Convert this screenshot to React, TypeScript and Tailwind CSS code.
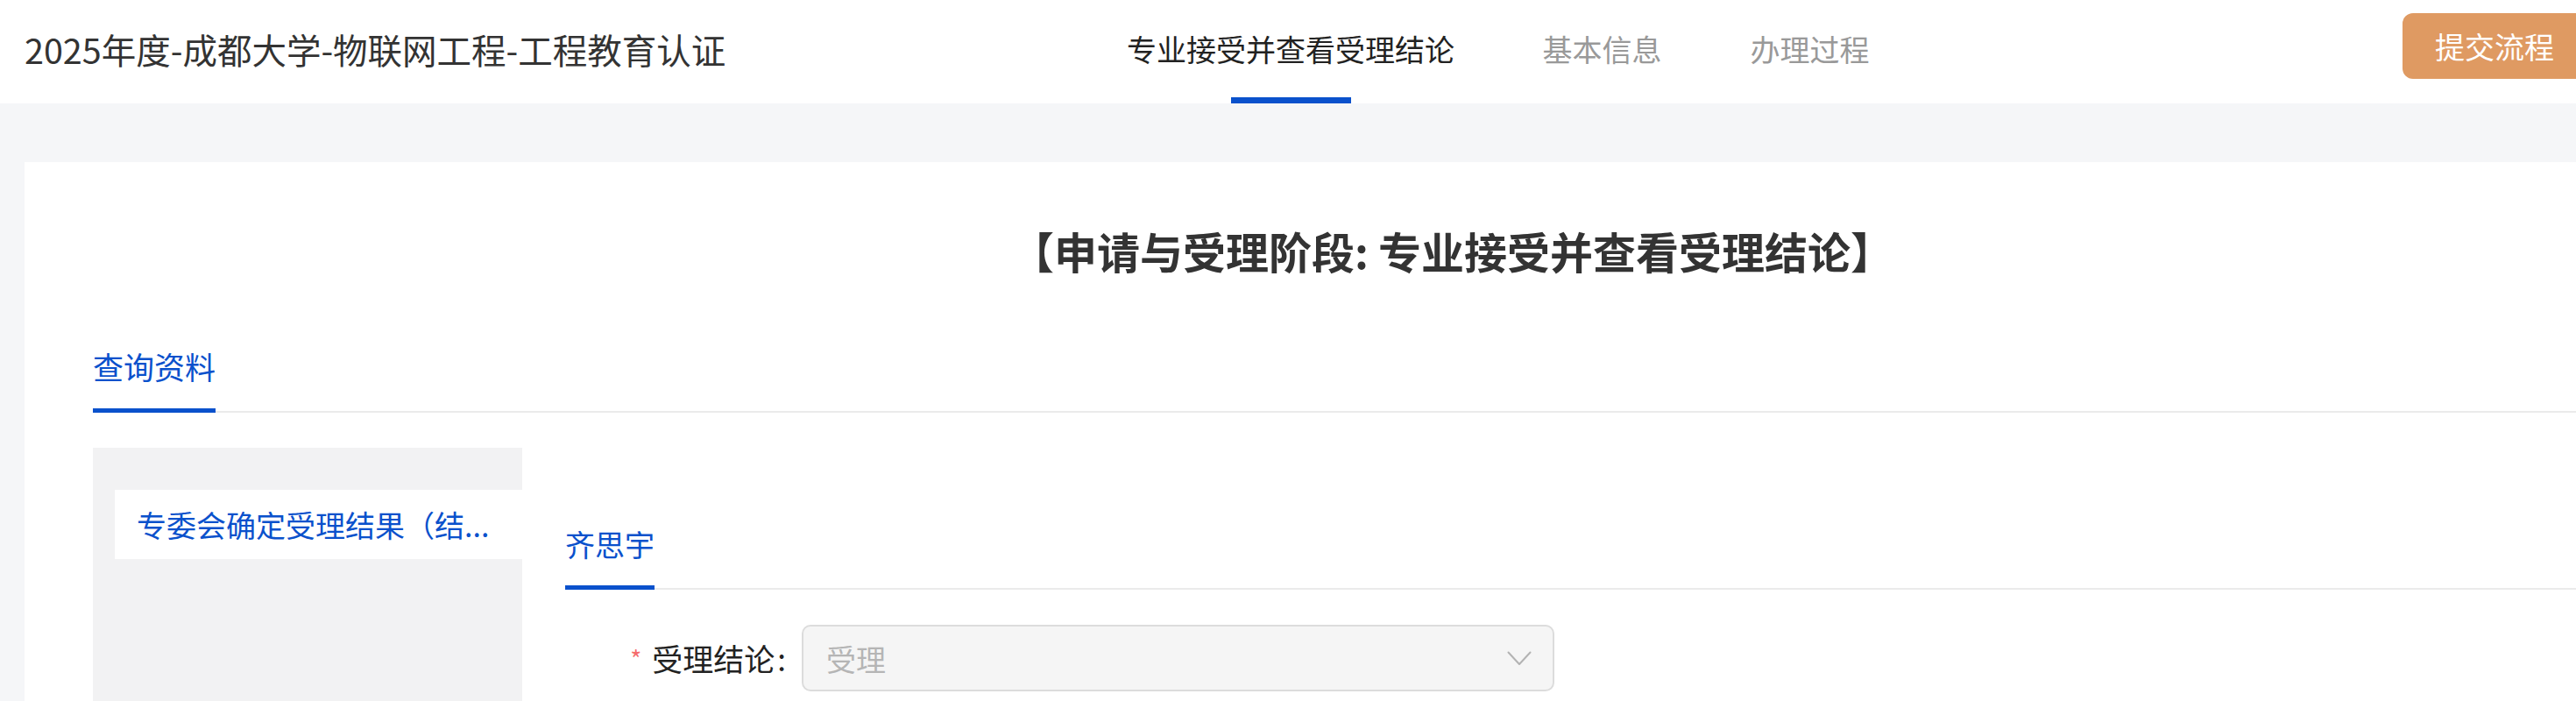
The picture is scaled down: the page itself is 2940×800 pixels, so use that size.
import { useState } from "react";

const navTabs = ["专业接受并查看受理结论", "基本信息", "办理过程"];

function Chevron() {
  return (
    <svg width="28" height="17" viewBox="0 0 28 17" fill="none">
      <path d="M1.5 1.5 L14 15 L26.5 1.5" stroke="#b3b3b3" strokeWidth="2" strokeLinejoin="round" strokeLinecap="round" />
    </svg>
  );
}

export default function App() {
  const [active] = useState(0);

  return (
    <div
      className="h-[800px] w-full overflow-hidden bg-[#f5f6f8]"
      style={{ fontFamily: '"Noto Sans CJK SC", "Liberation Sans", sans-serif' }}
    >
      <div className="w-[2968px]">
        {/* top bar */}
        <header className="flex h-[118px] items-start bg-white">
          <div className="flex h-[111px] w-[1286px] shrink-0 items-center pl-[28px] text-[39.5px] text-[#333]">
            2025年度-成都大学-物联网工程-工程教育认证
          </div>
          <nav className="flex gap-[100px]">
            {navTabs.map((t, i) => (
              <div key={t} className="flex h-[118px] flex-col items-center">
                <div
                  className={
                    "flex flex-1 items-center text-[34px] " +
                    (i === active ? "text-[#222]" : "text-[#999]")
                  }
                >
                  {t}
                </div>
                <div className={"h-[7px] w-[137px] " + (i === active ? "bg-[#0a51cc]" : "bg-transparent")} />
              </div>
            ))}
          </nav>
          <div className="flex-1" />
          <button className="mr-[16px] mt-[15px] h-[75px] rounded-[12px] bg-[#df9a62] px-[37px] text-[34px] text-white">
            提交流程
          </button>
        </header>

        <main className="pl-[28px] pt-[67px]">
          <section className="h-[700px] bg-white pl-[78px] pt-[66px]">
            <h1 className="pl-[1048px] text-[49px] font-bold leading-[70px] text-[#333]">
              【申请与受理阶段: 专业接受并查看受理结论】
            </h1>

            <div className="mt-[50px] flex border-b-2 border-[#ebebeb]">
              <div className="-mb-[2px] flex h-[100px] flex-col">
                <div className="flex flex-1 items-center text-[35px] text-[#0a51cc]">查询资料</div>
                <div className="h-[5px] bg-[#0a51cc]" />
              </div>
            </div>

            <div className="mt-[40px] flex">
              {/* left list */}
              <aside className="h-[400px] w-[490px] shrink-0 bg-[#f2f2f3] pt-[48px]">
                <div className="ml-[25px] flex h-[79px] items-center bg-white pl-[25px]">
                  <span className="whitespace-nowrap text-[34px] text-[#0a51cc]">专委会确定受理结果（结...</span>
                </div>
              </aside>

              {/* right content */}
              <div className="ml-[49px] flex-1 pt-[62px]">
                <div className="flex border-b-2 border-[#ebebeb]">
                  <div className="-mb-[2px] flex h-[100px] flex-col">
                    <div className="flex flex-1 items-center text-[34px] text-[#0a51cc]">齐思宇</div>
                    <div className="h-[5px] bg-[#0a51cc]" />
                  </div>
                </div>

                <div className="mt-[40px] flex items-center">
                  <div className="flex w-[270px] shrink-0 items-center justify-end pr-[18px] text-[35px] text-[#222]">
                    <span className="mr-[12px] text-[28px] text-[#f56c6c]">*</span>
                    受理结论<span className="ml-[3px]">:</span>
                  </div>
                  <div className="flex h-[76px] w-[859px] items-center justify-between rounded-[10px] border-2 border-[#dcdcdc] bg-[#f5f5f5] pl-[26px] pr-[24px]">
                    <span className="text-[34px] text-[#b5b5b5]">受理</span>
                    <Chevron />
                  </div>
                </div>
              </div>
            </div>
          </section>
        </main>
      </div>
    </div>
  );
}
